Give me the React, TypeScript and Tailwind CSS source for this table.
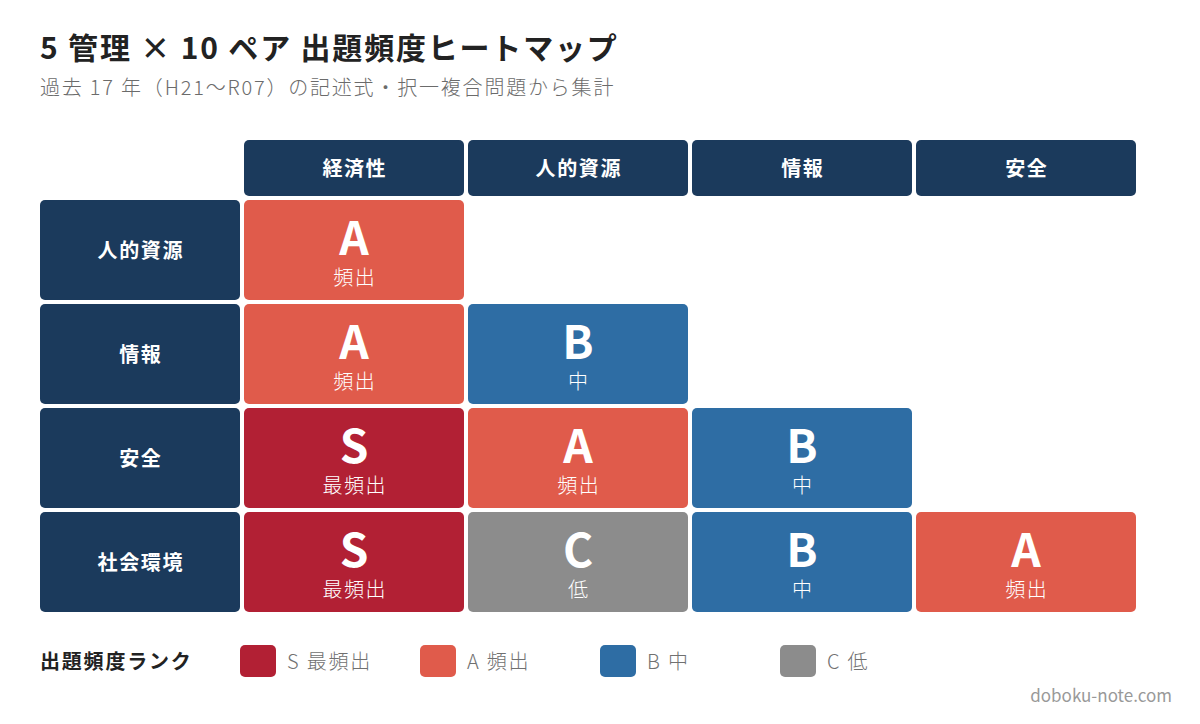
import React from "react";

const NAVY = "bg-[#1b3a5c]";

type Rank = "S" | "A" | "B" | "C";

const rankStyle: Record<Rank, { bg: string; label: string }> = {
  S: { bg: "bg-[#b22034]", label: "最頻出" },
  A: { bg: "bg-[#e05b4b]", label: "頻出" },
  B: { bg: "bg-[#2e6da4]", label: "中" },
  C: { bg: "bg-[#8c8c8c]", label: "低" },
};

const cols = ["経済性", "人的資源", "情報", "安全"];
const rows: { name: string; cells: (Rank | null)[] }[] = [
  { name: "人的資源", cells: ["A", null, null, null] },
  { name: "情報", cells: ["A", "B", null, null] },
  { name: "安全", cells: ["S", "A", "B", null] },
  { name: "社会環境", cells: ["S", "C", "B", "A"] },
];

function Cell({ rank }: { rank: Rank | null }) {
  if (!rank) return <div className="h-[100px]" />;
  const s = rankStyle[rank];
  return (
    <div
      className={`${s.bg} h-[100px] rounded-[5px] flex flex-col items-center justify-start pt-[12px] text-white`}
    >
      <div className="text-[46px] font-bold leading-[46px]">{rank}</div>
      <div className="mt-[6px] text-[20px] leading-[26px] font-light tracking-[0.08em] pl-[0.08em]">
        {s.label}
      </div>
    </div>
  );
}

export default function App() {
  return (
    <div
      className="w-[1200px] h-[724px] bg-white overflow-hidden pl-[40px] pt-[28px]"
      style={{ fontFamily: '"Noto Sans CJK JP", "Noto Sans", sans-serif' }}
    >
      <h1 className="text-[30px] font-bold leading-[36px] text-[#222222] tracking-[0.06em]">
        5 管理 × 10 ペア 出題頻度ヒートマップ
      </h1>
      <p className="mt-[9px] text-[20px] leading-[28px] font-light text-[#6b6b6b] tracking-[0.09em]">
        過去 17 年（H21〜R07）の記述式・択一複合問題から集計
      </p>

      <div className="mt-[39px] grid grid-cols-[200px_repeat(4,220px)] gap-[4px]">
        <div className="h-[56px]" />
        {cols.map((c) => (
          <div
            key={c}
            className={`${NAVY} h-[56px] rounded-[5px] flex items-center justify-center text-white text-[20px] font-bold tracking-[0.08em] pl-[0.08em]`}
          >
            {c}
          </div>
        ))}
        {rows.map((r) => (
          <React.Fragment key={r.name}>
            <div
              className={`${NAVY} h-[100px] rounded-[5px] flex items-center justify-center text-white text-[20px] font-bold tracking-[0.08em] pl-[0.08em]`}
            >
              {r.name}
            </div>
            {r.cells.map((c, i) => (
              <Cell key={i} rank={c} />
            ))}
          </React.Fragment>
        ))}
      </div>

      <div className="mt-[33px] flex items-center h-[32px]">
        <div className="w-[200px] text-[20px] font-bold text-[#222222] tracking-[0.09em]">
          出題頻度ランク
        </div>
        {(["S", "A", "B", "C"] as Rank[]).map((r) => (
          <div key={r} className="w-[180px] flex items-center">
            <div className={`${rankStyle[r].bg} w-[36px] h-[32px] rounded-[5px]`} />
            <span className="ml-[11px] text-[20px] font-light text-[#707070] tracking-[0.09em]">
              {r} {rankStyle[r].label}
            </span>
          </div>
        ))}
      </div>

      <div className="mt-[6px] pr-[28px] text-right text-[17px] leading-[24px] text-[#999999]">
        doboku-note.com
      </div>
    </div>
  );
}
